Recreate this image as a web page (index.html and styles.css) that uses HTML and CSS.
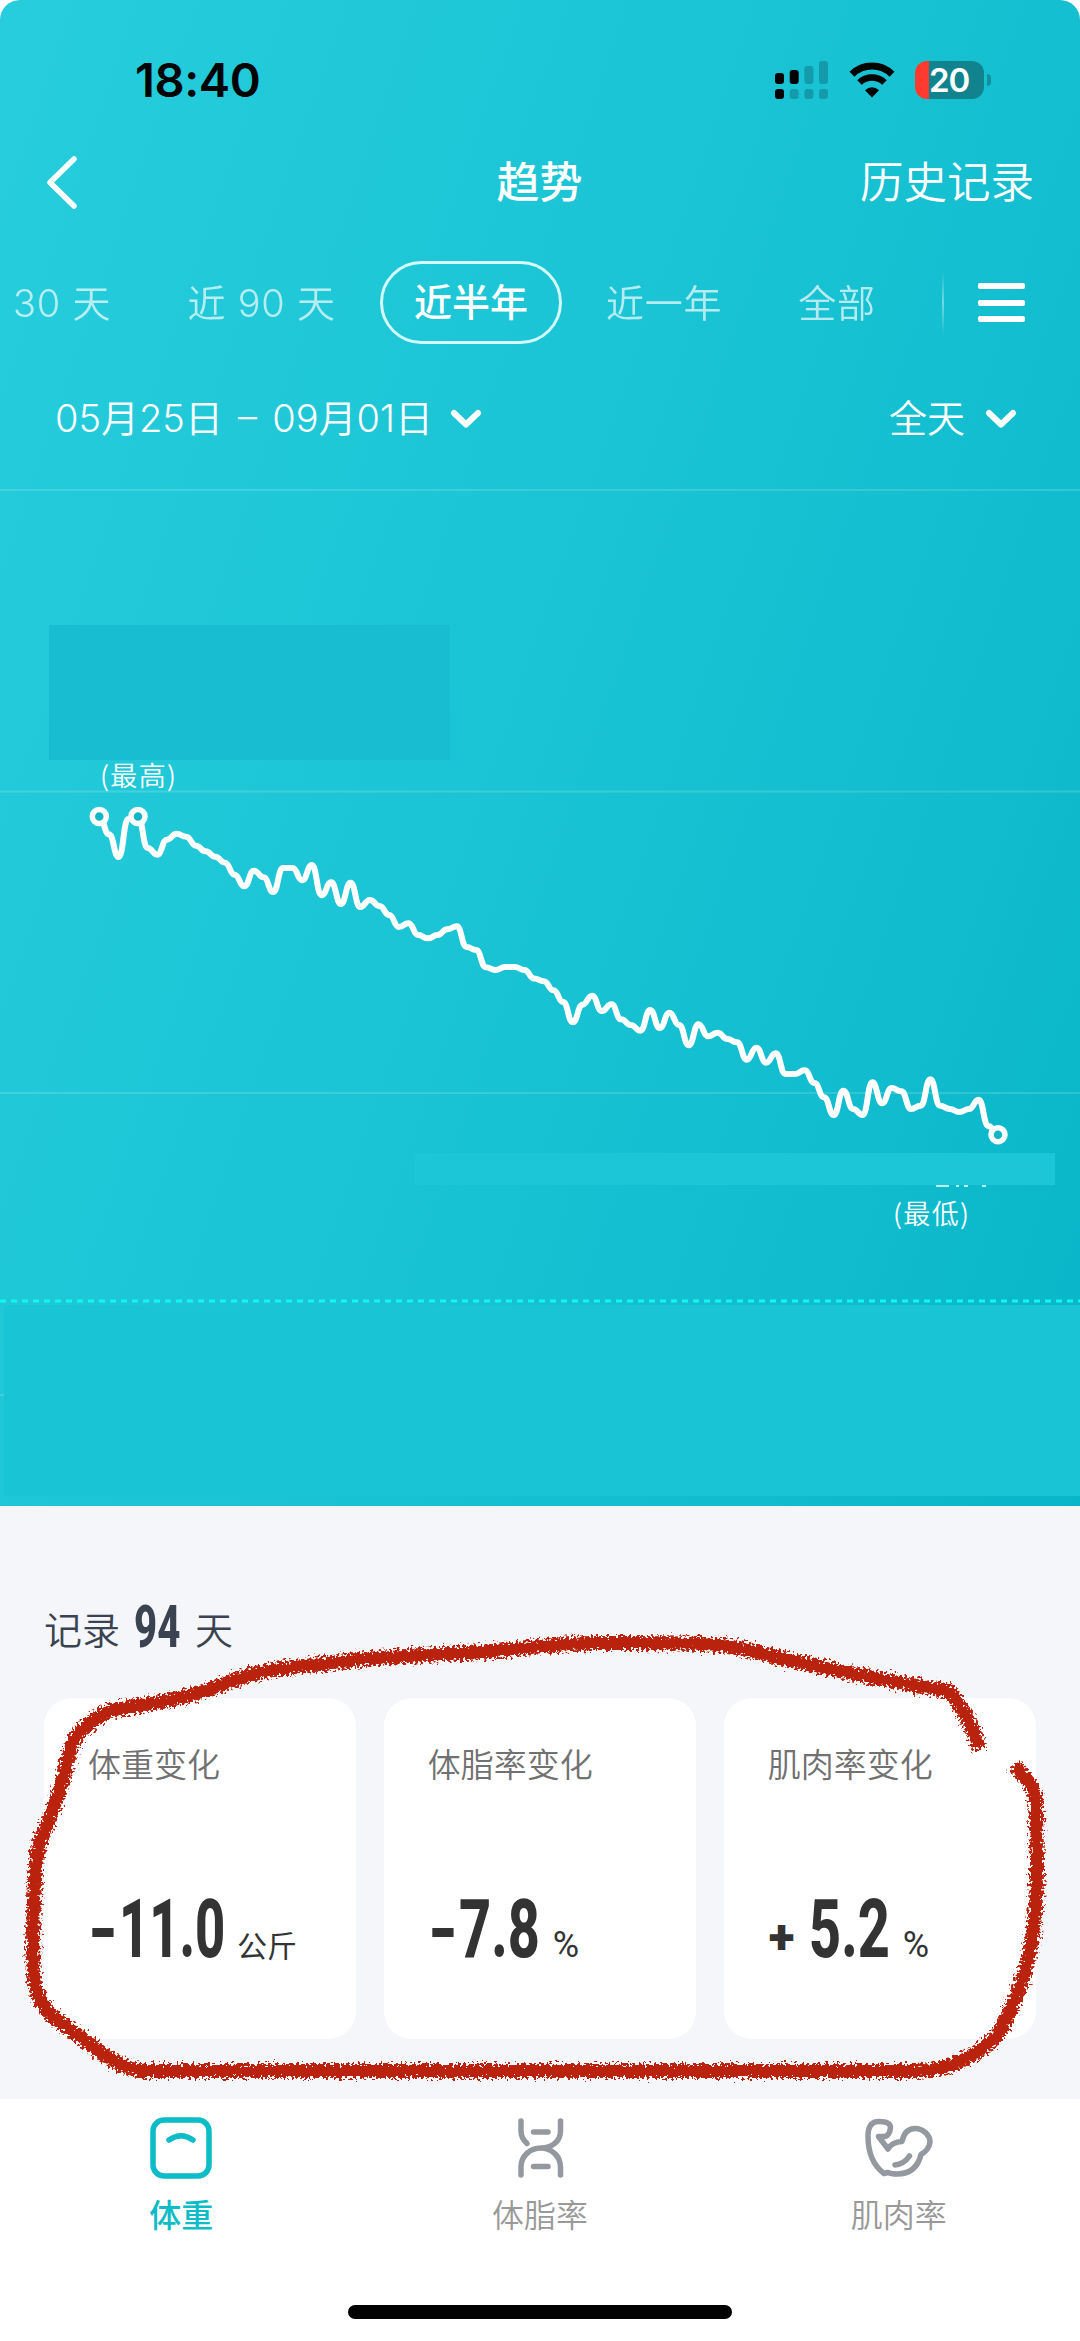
FILE: index.html
```
<!DOCTYPE html>
<html lang="zh-CN">
<head>
    <meta charset="UTF-8">
    <meta name="viewport" content="width=device-width, initial-scale=1.0">
    <title>趋势</title>
    <link rel="stylesheet" href="styles.css">
</head>
<body>
    <div class="app">
        <section class="hero">
            <div class="status-bar">
                <span class="time">18:40</span>
                <div class="status-icons">
                    <svg class="signal" width="54" height="38" viewBox="0 0 54 38">
                        <rect x="0" y="12" width="9" height="11" rx="3"/>
                        <rect x="14.7" y="9" width="9" height="14" rx="3"/>
                        <rect class="off" x="29.4" y="5" width="9" height="18" rx="3"/>
                        <rect class="off" x="44" y="0" width="9" height="23" rx="3"/>
                        <rect x="0" y="28" width="9" height="10" rx="3"/>
                        <rect class="off" x="14.7" y="28" width="9" height="10" rx="3"/>
                        <rect class="off" x="29.4" y="28" width="9" height="10" rx="3"/>
                        <rect class="off" x="44" y="28" width="9" height="10" rx="3"/>
                    </svg>
                    <svg class="wifi" width="46" height="38" viewBox="0 0 46 38">
                        <path d="M3 13.2A28.500 28.500 0 0 1 43 13.200" fill="none" stroke="#000" stroke-width="7"/>
                        <path d="M10.500 21.500A18 18 0 0 1 35.500 21.500" fill="none" stroke="#000" stroke-width="6.500"/>
                        <path d="M23 36.500L16 29.200Q23 23.500 30 29.200Z"/>
                    </svg>
                    <div class="battery"><span>20</span></div>
                </div>
            </div>

            <header class="nav">
                <button class="back" aria-label="返回">
                    <svg width="34" height="56" viewBox="0 0 34 56"><path d="M29 5L5 28.500L29 52" fill="none" stroke="#fff" stroke-width="5.500" stroke-linecap="round" stroke-linejoin="round"/></svg>
                </button>
                <h1>趋势</h1>
                <a class="history">历史记录</a>
            </header>

            <div class="ranges">
                <span class="range first">30 天</span>
                <span class="range">近 90 天</span>
                <span class="range active">近半年</span>
                <span class="range">近一年</span>
                <span class="range">全部</span>
                <i class="divider"></i>
                <div class="menu"><i></i><i></i><i></i></div>
            </div>

            <div class="filters">
                <span class="filter dates"><span>05月25日 – 09月01日</span>
                    <svg width="32" height="20" viewBox="0 0 32 20"><path d="M4 4L16 15.500L28 4"/></svg>
                </span>
                <span class="filter"><span>全天</span>
                    <svg width="32" height="20" viewBox="0 0 32 20"><path d="M4 4L16 15.500L28 4"/></svg>
                </span>
            </div>

            <svg class="chart" width="1080" height="1017" viewBox="0 489 1080 1017">
                <g class="grid">
                    <line x1="0" y1="490" x2="1080" y2="490"/>
                    <line x1="0" y1="791.500" x2="1080" y2="791.500"/>
                    <line x1="0" y1="1093" x2="1080" y2="1093"/>
                    <line x1="0" y1="1395" x2="4" y2="1395"/>
                </g>
                <rect x="49" y="625" width="401" height="135" fill="#18bdd2"/>
                <rect x="415" y="1153" width="640" height="32" fill="#1cc6d7"/>
                <path class="scraps" d="M936 1186h13M956 1186h3M964 1186h4M982 1186h4"/>
                <text x="138" y="786" text-anchor="middle" textLength="76">(最高)</text>
                <text x="931" y="1224" text-anchor="middle" textLength="76">(最低)</text>
                <path id="trend" class="trend"/>
                <g class="dots">
                    <circle cx="99.300" cy="816.500" r="7"/>
                    <circle cx="138" cy="816.500" r="7"/>
                    <circle cx="998" cy="1134.700" r="7"/>
                </g>
                <rect x="4" y="1305" width="1076" height="191" fill="#19c5d4"/>
                <line class="target" x1="0" y1="1301" x2="1080" y2="1301"/>
            </svg>
        </section>

        <section class="summary">
            <p class="days">记录<b>94</b>天</p>
            <div class="cards">
                <div class="card">
                    <h2>体重变化</h2>
                    <p class="value"><b class="minus">-</b><b class="num weight"><span>11.0</span></b><small>公斤</small></p>
                </div>
                <div class="card">
                    <h2>体脂率变化</h2>
                    <p class="value"><b class="minus">-</b><b class="num fat"><span>7.8</span></b><small class="pct">%</small></p>
                </div>
                <div class="card">
                    <h2>肌肉率变化</h2>
                    <p class="value"><i class="plus">+</i><b class="num muscle"><span>5.2</span></b><small class="pct">%</small></p>
                </div>
            </div>
            <!-- crayon circle over the cards -->
            <svg class="crayon" width="1080" height="480" viewBox="0 1620 1080 480">
                <defs>
                    <filter id="rough" filterUnits="userSpaceOnUse" x="0" y="1620" width="1080" height="480">
                        <feTurbulence type="fractalNoise" baseFrequency="0.38" numOctaves="2" seed="4" result="n"/>
                        <feDisplacementMap in="SourceGraphic" in2="n" scale="14" xChannelSelector="R" yChannelSelector="G"/>
                    </filter>
                </defs>
                <g filter="url(#rough)">
                    <path d="M980 1749C974 1732 966 1712 950 1692C938 1687 922 1688 912 1685L850 1673L798 1662C770 1656 745 1648 719 1645C680 1642 640 1643 592 1643C540 1644 510 1652 443 1654C400 1656 370 1658 339 1662C300 1667 270 1669 257 1673C230 1680 205 1693 179 1698C150 1705 128 1706 107 1712C90 1721 76 1733 71 1747C66 1765 62 1790 50 1817C42 1838 38 1845 37 1855C34 1885 32 1940 34 1975C35 1992 42 2008 57 2020L82 2038C104 2056 122 2069 143 2071H915C955 2071 980 2052 998 2035C1009 2014 1022 1985 1028 1960C1036 1925 1037 1895 1037 1867L1036 1800C1034 1786 1029 1781 1014 1766"/>
                </g>
            </svg>
        </section>

        <footer class="tabbar">
            <div class="tab active">
                <svg width="62" height="62" viewBox="0 0 62 62"><rect x="3" y="3" width="56" height="56" rx="11"/><path d="M19 23Q31 14.500 43 23"/></svg>
                <span>体重</span>
            </div>
            <div class="tab">
                <svg width="62" height="62" viewBox="0 0 62 62"><path d="M12 4V14Q12 21 18 26.500M51.500 4V14C51.500 25 42 31 32 31C21 31 12 39 12 50V58M32 31C42 31 51.500 39 51.500 50V58M24.500 15H39M24.500 49.500H39"/></svg>
                <span>体脂率</span>
            </div>
            <div class="tab">
                <svg width="68" height="62" viewBox="0 0 68 62"><path d="M19 56.500C9 49 3 36 3 19C3 9 7 4.500 14 4.500C20 4.500 25 6 25.500 10Q25 18 20 19.500H13.500L23 32Q27 25 37 24.500C39 15 44 11.500 50 11.500C58 11.500 65 18 65 25Q64 33 56 37.500C53 50 45 57 32 57Q26 57 23 55.500L19 56.500ZM30 48Q39 47 44.500 39"/></svg>
                <span>肌肉率</span>
            </div>
        </footer>
        <div class="home-indicator"></div>
    </div>

    <script src="app.js"></script>
</body>
</html>
```

FILE: styles.css
```
* {
    margin: 0;
    padding: 0;
    box-sizing: border-box;
}

body {
    background: #fff;
    color: #333;
    font-family: Inter, 'Noto Sans CJK SC', sans-serif;
}

.app {
    width: 1080px;
    height: 2341px;
    overflow: hidden;
    display: flex;
    flex-direction: column;
}

.hero {
    height: 1506px;
    flex: none;
    border-radius: 20px 20px 0 0;
    background: linear-gradient(109deg, #27cddc 0%, #1ac4d4 48%, #12bdcf 74%, #07b6c8 100%);
    color: #fff;
    display: flex;
    flex-direction: column;
}

.status-bar {
    height: 138px;
    padding: 60px 90px 0 135px;
    display: flex;
    justify-content: space-between;
    align-items: flex-start;
}

.time {
    color: #000;
    font-size: 47px;
    font-weight: 600;
    line-height: 40px;
    letter-spacing: -0.4px;
}

.status-icons {
    display: flex;
    align-items: center;
    padding-top: 1px;
}

.signal {
    margin-right: 20px;
}

.signal .off {
    fill: #139aab;
}

.wifi {
    margin-right: 20px;
}

.battery {
    width: 69px;
    height: 38px;
    margin-right: 6px;
    border-radius: 12px;
    background: linear-gradient(90deg, #ff3b30 14px, #11838f 14px);
    font-size: 33px;
    font-weight: 600;
    line-height: 38px;
    padding-left: 14px;
    letter-spacing: -1px;
    position: relative;
}

.battery::after {
    content: '';
    position: absolute;
    left: 72px;
    top: 13px;
    width: 4px;
    height: 12px;
    border-radius: 0 5px 5px 0;
    background: #11909f;
}

.nav {
    height: 87px;
    padding: 0 46px 0 45px;
    display: grid;
    grid-template-columns: 1fr auto 1fr;
    align-items: center;
}

.back {
    border: none;
    background: none;
    display: flex;
}

.nav h1 {
    font-size: 43px;
    font-weight: 500;
    padding-bottom: 5px;
}

.history {
    font-size: 43.500px;
    font-weight: 350;
    text-align: right;
    padding-bottom: 4px;
}

.ranges {
    height: 155px;
    padding: 0 55px 0 13px;
    display: flex;
    align-items: center;
    font-size: 38px;
    font-weight: 350;
}

.range {
    opacity: 0.68;
    white-space: nowrap;
    margin-right: 44px;
    padding-bottom: 4px;
    letter-spacing: 0.8px;
}

.range.first {
    margin-right: 76px;
}

.range:nth-child(4) {
    margin-right: 76px;
}

.range:nth-child(5) {
    margin-right: 0;
}

.range.active {
    opacity: 1;
    flex: none;
    width: 182px;
    height: 83px;
    line-height: 77px;
    padding: 0;
    letter-spacing: 0;
    text-align: center;
    font-weight: 500;
    border: 3px solid #d3fafd;
    border-radius: 42px;
}

.divider {
    width: 2px;
    height: 62px;
    background: linear-gradient(rgba(255, 255, 255, 0), rgba(255, 255, 255, 0.4), rgba(255, 255, 255, 0));
    margin-left: auto;
    margin-right: 34px;
}

.menu {
    width: 47px;
    display: flex;
    flex-direction: column;
    gap: 10.500px;
}

.menu i {
    height: 6px;
    border-radius: 2px;
    background: #fff;
}

.filters {
    height: 109px;
    padding: 0 63px 32px 55px;
    display: flex;
    justify-content: space-between;
    align-items: center;
    font-size: 38px;
    font-weight: 350;
}

.filter {
    display: flex;
    align-items: center;
    gap: 20px;
}

.filter span {
    padding-bottom: 6px;
}

.filter.dates {
    gap: 17px;
    word-spacing: 4.500px;
}

.filter path {
    fill: none;
    stroke: #fff;
    stroke-width: 6;
    stroke-linecap: round;
    stroke-linejoin: round;
}

.chart {
    display: block;
    flex: none;
}

.chart text {
    fill: #fff;
    font-size: 27px;
    font-weight: 350;
    font-family: 'Noto Sans CJK SC', sans-serif;
}

.grid line {
    stroke: rgba(255, 255, 255, 0.15);
    stroke-width: 2;
}

.scraps {
    stroke: #b9f2f5;
    stroke-width: 2;
}

.trend {
    fill: none;
    stroke: #fff;
    stroke-width: 6;
    stroke-linejoin: round;
}

.dots circle {
    fill: #12b7c6;
    stroke: #fff;
    stroke-width: 5.500;
}

.target {
    stroke: #10f8f0;
    stroke-width: 3;
    stroke-dasharray: 6 5;
}

.summary {
    height: 593px;
    flex: none;
    padding: 88px 44px 0;
    background: #f4f6fa;
    position: relative;
}

.days {
    height: 104px;
    font-size: 38px;
    font-weight: 350;
    line-height: 60px;
    color: #3a434f;
    display: flex;
    align-items: baseline;
}

.days b {
    font-family: Roboto, sans-serif;
    font-size: 60px;
    font-weight: 800;
    width: 48px;
    margin: 0 13px 0 14px;
    transform: translateY(3px) scaleX(0.67);
    transform-origin: left;
}

.cards {
    display: flex;
    gap: 27.500px;
}

.card {
    flex: 1;
    height: 341px;
    border-radius: 28px;
    background: #fff;
    padding: 43px 0 0 44px;
}

.card h2 {
    font-size: 33px;
    font-weight: 350;
    line-height: 48px;
    color: #717171;
    white-space: nowrap;
}

.value {
    display: flex;
    align-items: baseline;
    margin-top: 92px;
    line-height: 96px;
    color: #333;
}

.minus {
    font-family: Roboto, sans-serif;
    font-size: 81px;
    font-weight: 700;
    width: 31px;
    transform: scaleX(0.95);
    transform-origin: left;
}

.num {
    font-family: Roboto, sans-serif;
    font-size: 82px;
    font-weight: 800;
    height: 96px;
}

.num span {
    display: inline-block;
    transform: scaleX(0.64);
    transform-origin: left;
}

.num.weight {
    width: 118px;
}

.num.fat {
    width: 94px;
}

.num.muscle {
    width: 94px;
}

.num.fat span,
.num.muscle span {
    transform: scaleX(0.68);
}

.plus {
    font-family: Roboto, sans-serif;
    font-style: normal;
    font-size: 48px;
    font-weight: 900;
    width: 41px;
    padding-left: 1px;
    transform: translateY(-3px);
}

.value small {
    font-size: 30px;
    font-weight: 400;
}

.value .pct {
    font-family: Roboto, sans-serif;
    font-size: 36px;
}

.crayon {
    position: absolute;
    left: 0;
    top: 114px;
    pointer-events: none;
}

.crayon path {
    fill: none;
    stroke: #b92008;
    stroke-width: 14;
    stroke-linejoin: round;
}

.tabbar {
    height: 206px;
    flex: none;
    padding: 0 2px;
    background: #fff;
    display: flex;
}

.tab {
    flex: 1;
    display: flex;
    flex-direction: column;
    align-items: center;
    padding-top: 18px;
    color: #999;
    font-size: 32px;
    font-weight: 350;
}

.tab span {
    line-height: 44px;
    margin-top: 15px;
}

.tab svg {
    fill: none;
    stroke: #9499a0;
    stroke-width: 5.500;
    stroke-linecap: round;
    stroke-linejoin: round;
}

.tab.active {
    color: #0cbcc6;
    font-weight: 500;
}

.tab.active svg {
    stroke: #0cbcc6;
}

.home-indicator {
    width: 384px;
    height: 14px;
    margin: 0 auto;
    border-radius: 7px;
    background: #000;
    flex: none;
}
```

FILE: app.js
```
// one y value per recorded day, 94 days
const points = [
    816.5, 834.3, 857, 819, 816.5, 848, 854.7, 839.7, 833.7, 836.7,
    845.7, 851.3, 856.7, 862.7, 874.7, 886.3, 870.7, 877.3, 892, 868,
    868, 880.3, 865, 895.3, 882.3, 904, 882.7, 907, 900, 906,
    915, 927, 923.3, 935, 938.3, 935, 929.3, 926.3, 947, 950,
    967.3, 970, 967, 967, 970, 978.5, 981.3, 990.3, 1002, 1022.3,
    1004.7, 995.7, 1011, 1004.3, 1019.3, 1025, 1030.7, 1010, 1028, 1012.7,
    1025, 1045.3, 1024.3, 1036.3, 1032.7, 1039, 1042.3, 1059.7, 1047.7, 1062.7,
    1053.3, 1074, 1074, 1070.3, 1083, 1097.3, 1115, 1090.7, 1109, 1115,
    1082.3, 1103.3, 1088, 1091.3, 1109, 1105.7, 1079.3, 1105.7, 1109, 1112,
    1109, 1099.7, 1126, 1134.7
];

const startX = 99.3;
const step = (998 - startX) / (points.length - 1);

let d = `M${startX} ${points[0]}`;
for (let i = 1; i < points.length; i++) {
    const x = startX + step * i;
    const mid = x - step / 2;
    d += `C${mid} ${points[i - 1]} ${mid} ${points[i]} ${x} ${points[i]}`;
}

document.getElementById('trend').setAttribute('d', d);
```
